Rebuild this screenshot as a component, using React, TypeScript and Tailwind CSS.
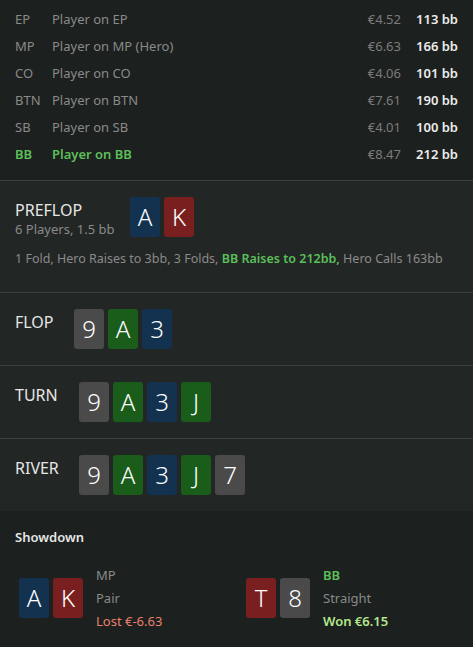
type Suit = "s" | "h" | "c" | "d";

const suitBg: Record<Suit, string> = {
  s: "bg-[#4a4a4a]",
  h: "bg-[#7a1f1f]",
  c: "bg-[#1a5c1a]",
  d: "bg-[#13324f]",
};

const players = [
  { pos: "EP", name: "Player on EP", money: "€4.52", bb: "113 bb" },
  { pos: "MP", name: "Player on MP (Hero)", money: "€6.63", bb: "166 bb" },
  { pos: "CO", name: "Player on CO", money: "€4.06", bb: "101 bb" },
  { pos: "BTN", name: "Player on BTN", money: "€7.61", bb: "190 bb" },
  { pos: "SB", name: "Player on SB", money: "€4.01", bb: "100 bb" },
  { pos: "BB", name: "Player on BB", money: "€8.47", bb: "212 bb", winner: true },
];

function Card({ rank, suit }: { rank: string; suit: Suit }) {
  return (
    <div
      className={`flex h-[40px] w-[30px] items-center justify-center rounded-[3px] text-[24px] font-light leading-none text-white ${suitBg[suit]}`}
    >
      {rank}
    </div>
  );
}

function Street({
  label,
  cards,
  offset,
}: {
  label: string;
  cards: [string, Suit][];
  offset: string;
}) {
  return (
    <section className="flex border-t border-[#3b3f3d] bg-[#222625] px-[15px] pt-[16px] pb-[16px]">
      <div className={`pt-[3px] text-[16px] leading-[20px] text-[#e6e6e6] ${offset}`}>{label}</div>
      <div className="flex gap-[4px]">
        {cards.map(([r, s], i) => (
          <Card key={i} rank={r} suit={s} />
        ))}
      </div>
    </section>
  );
}

export default function App() {
  const board: [string, Suit][] = [
    ["9", "s"],
    ["A", "c"],
    ["3", "d"],
    ["J", "c"],
    ["7", "s"],
  ];

  return (
    <div className="min-h-[647px] bg-[#1c201e] font-['Segoe_UI','Noto_Sans',sans-serif] text-[13px]">
      <div className="px-[15px] pt-[6px] pb-[12px]">
        {players.map((p) => (
          <div key={p.pos} className="flex h-[27px] items-center">
            <span
              className={`w-[37px] ${p.winner ? "font-semibold text-[#5cbf5a]" : "text-[#8a8a8a]"}`}
            >
              {p.pos}
            </span>
            <span
              className={`flex-1 ${p.winner ? "font-semibold text-[#5cbf5a]" : "text-[#8a8a8a]"}`}
            >
              {p.name}
            </span>
            <span className="text-[#7c7c7c]">{p.money}</span>
            <span className="w-[57px] text-right font-semibold text-[#ececec]">{p.bb}</span>
          </div>
        ))}
      </div>

      <section className="border-t border-[#3b3f3d] bg-[#222625] px-[15px] pt-[16px] pb-[23px]">
        <div className="flex">
          <div className="w-[115px] pt-[3px]">
            <div className="text-[16px] leading-[20px] text-[#e6e6e6]">PREFLOP</div>
            <div className="leading-[18px] text-[#8a8a8a]">6 Players, 1.5 bb</div>
          </div>
          <div className="flex gap-[4px]">
            <Card rank="A" suit="d" />
            <Card rank="K" suit="h" />
          </div>
        </div>
        <p className="mt-[12px] whitespace-nowrap text-[12.5px] text-[#8a8a8a]">
          1 Fold, Hero Raises to 3bb, 3 Folds,{" "}
          <span className="font-semibold text-[#5cbf5a]">BB Raises to 212bb,</span> Hero Calls
          163bb
        </p>
      </section>

      <Street label="FLOP" cards={board.slice(0, 3)} offset="w-[59px]" />
      <Street label="TURN" cards={board.slice(0, 4)} offset="w-[64px]" />
      <Street label="RIVER" cards={board} offset="w-[64px]" />

      <section className="px-[15px] pt-[17px] pb-[20px]">
        <h3 className="font-semibold text-[#e6e6e6]">Showdown</h3>
        <div className="mt-[19px] flex">
          <div className="flex w-[231px] items-center pl-[4px]">
            <div className="flex gap-[4px]">
              <Card rank="A" suit="d" />
              <Card rank="K" suit="h" />
            </div>
            <div className="ml-[13px] flex flex-col gap-[5px] leading-[18px]">
              <span className="text-[#8a8a8a]">MP</span>
              <span className="text-[#8a8a8a]">Pair</span>
              <span className="text-[#e8806f]">Lost €-6.63</span>
            </div>
          </div>
          <div className="flex items-center">
            <div className="flex gap-[4px]">
              <Card rank="T" suit="h" />
              <Card rank="8" suit="s" />
            </div>
            <div className="ml-[13px] flex flex-col gap-[5px] leading-[18px]">
              <span className="font-semibold text-[#5cbf5a]">BB</span>
              <span className="text-[#8a8a8a]">Straight</span>
              <span className="font-semibold text-[#b5e88c]">Won €6.15</span>
            </div>
          </div>
        </div>
      </section>
    </div>
  );
}
